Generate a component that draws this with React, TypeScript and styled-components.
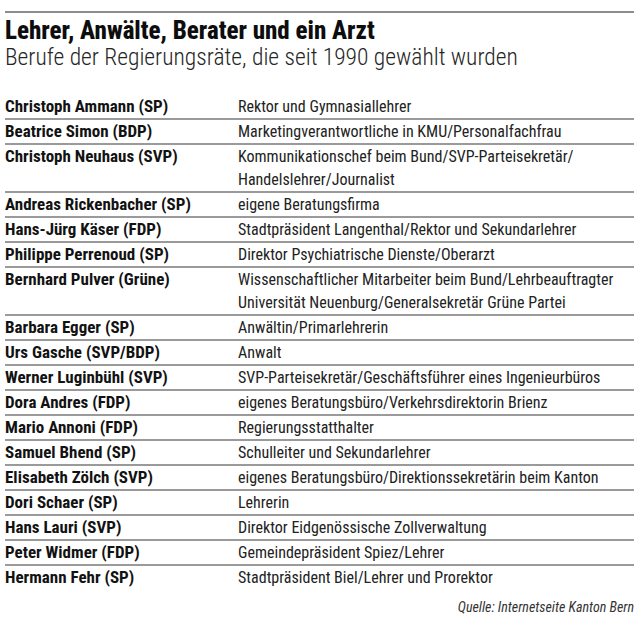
import React from "react";
import styled, { createGlobalStyle } from "styled-components";

const Global = createGlobalStyle`
  html, body { margin: 0; padding: 0; background: #fff; }
  body { font-family: "Roboto Condensed", "Open Sans", sans-serif; font-stretch: condensed; color: #161616; }
`;

const Page = styled.div`
  width: 640px;
  box-sizing: border-box;
  padding: 11px 6px 0 5px;
`;

const TopRule = styled.div`
  border-top: 2px solid #8c8c8c;
`;

const Title = styled.h1`
  margin: 4px 0 0 0;
  font-size: 25px;
  line-height: 27px;
  font-weight: 800;
  color: #0d0d0d;
`;

const Subtitle = styled.h2`
  margin: 0;
  font-size: 23.5px;
  line-height: 26px;
  font-weight: 300;
  color: #262626;
`;

const Table = styled.div`
  margin-top: 25px;
  display: flex;
  flex-direction: column;
`;

const Row = styled.div<{ $last?: boolean }>`
  display: grid;
  grid-template-columns: 233px 1fr;
  align-items: start;
  border-bottom: ${(p) => (p.$last ? "none" : "2px solid #9a9a9a")};
  line-height: 23px;
`;

const Name = styled.div`
  font-size: 17px;
  font-weight: 700;
  color: #121212;
`;

const Job = styled.div`
  font-size: 16px;
  font-weight: 400;
  color: #222;
`;

const Source = styled.div`
  margin-top: 10px;
  text-align: right;
  font-size: 14px;
  line-height: 16px;
  font-style: italic;
  color: #333;
`;

const rows: [string, string[]][] = [
  ["Christoph Ammann (SP)", ["Rektor und Gymnasiallehrer"]],
  ["Beatrice Simon (BDP)", ["Marketingverantwortliche in KMU/Personalfachfrau"]],
  ["Christoph Neuhaus (SVP)", ["Kommunikationschef beim Bund/SVP-Parteisekretär/", "Handelslehrer/Journalist"]],
  ["Andreas Rickenbacher (SP)", ["eigene Beratungsfirma"]],
  ["Hans-Jürg Käser (FDP)", ["Stadtpräsident Langenthal/Rektor und Sekundarlehrer"]],
  ["Philippe Perrenoud (SP)", ["Direktor Psychiatrische Dienste/Oberarzt"]],
  ["Bernhard Pulver (Grüne)", ["Wissenschaftlicher Mitarbeiter beim Bund/Lehrbeauftragter", "Universität Neuenburg/Generalsekretär Grüne Partei"]],
  ["Barbara Egger (SP)", ["Anwältin/Primarlehrerin"]],
  ["Urs Gasche (SVP/BDP)", ["Anwalt"]],
  ["Werner Luginbühl (SVP)", ["SVP-Parteisekretär/Geschäftsführer eines Ingenieurbüros"]],
  ["Dora Andres (FDP)", ["eigenes Beratungsbüro/Verkehrsdirektorin Brienz"]],
  ["Mario Annoni (FDP)", ["Regierungsstatthalter"]],
  ["Samuel Bhend (SP)", ["Schulleiter und Sekundarlehrer"]],
  ["Elisabeth Zölch (SVP)", ["eigenes Beratungsbüro/Direktionssekretärin beim Kanton"]],
  ["Dori Schaer (SP)", ["Lehrerin"]],
  ["Hans Lauri (SVP)", ["Direktor Eidgenössische Zollverwaltung"]],
  ["Peter Widmer (FDP)", ["Gemeindepräsident Spiez/Lehrer"]],
  ["Hermann Fehr (SP)", ["Stadtpräsident Biel/Lehrer und Prorektor"]],
];

export default function App() {
  return (
    <>
      <Global />
      <Page>
        <TopRule />
        <Title>Lehrer, Anwälte, Berater und ein Arzt</Title>
        <Subtitle>Berufe der Regierungsräte, die seit 1990 gewählt wurden</Subtitle>
        <Table>
          {rows.map(([name, jobs], i) => (
            <Row key={name} $last={i === rows.length - 1}>
              <Name>{name}</Name>
              <Job>
                {jobs.map((j) => (
                  <div key={j}>{j}</div>
                ))}
              </Job>
            </Row>
          ))}
        </Table>
        <Source>Quelle: Internetseite Kanton Bern</Source>
      </Page>
    </>
  );
}
